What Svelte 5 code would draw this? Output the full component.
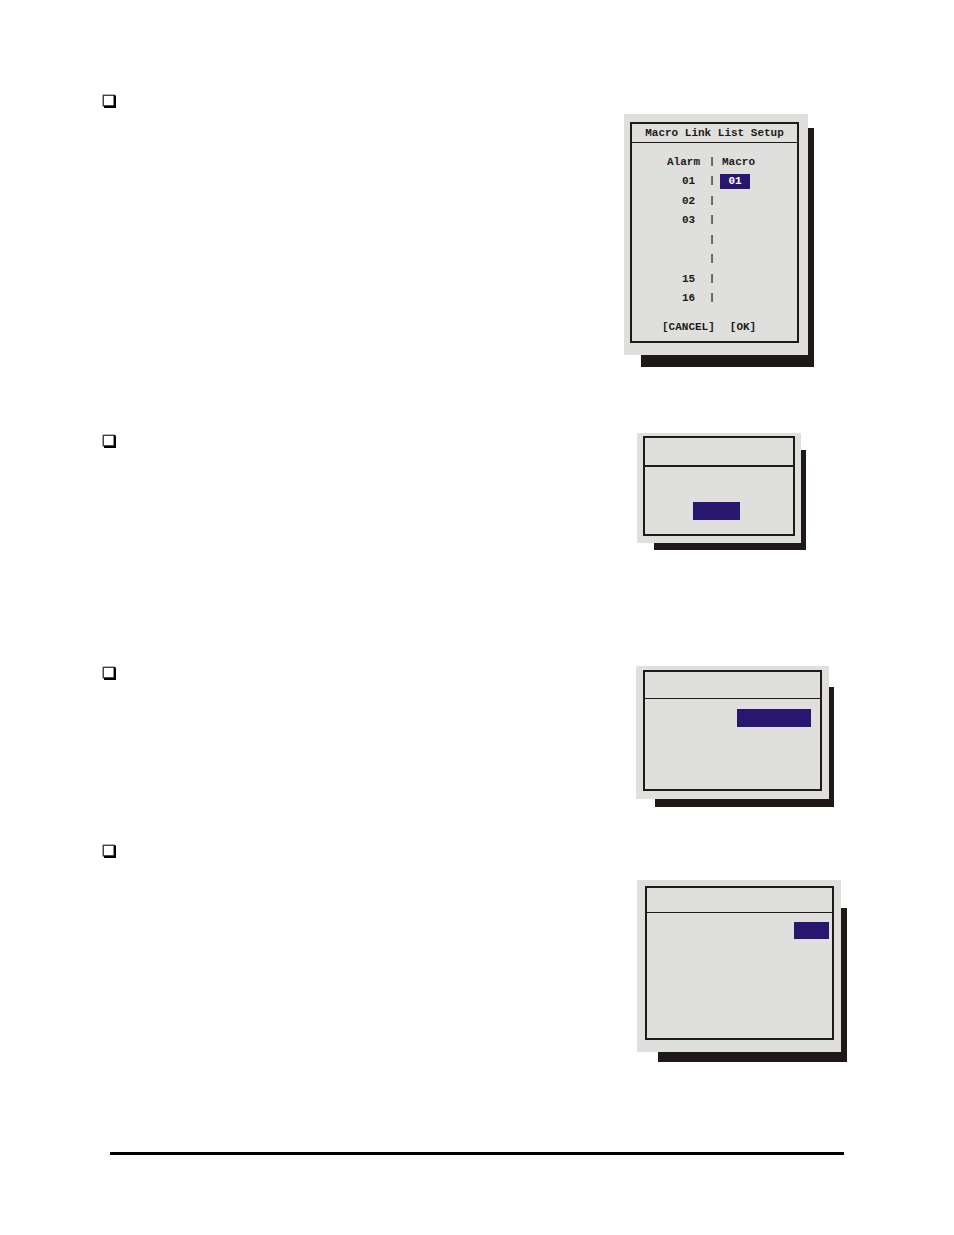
<script lang="ts">
  const rows = ['01', '02', '03', '', '', '15', '16']

  let linkedMacro = $state('01')

  const cancel = () => {
    linkedMacro = ''
  }

  const confirm = () => {
    linkedMacro = linkedMacro.trim().padStart(2, '0')
  }
</script>

{#snippet checkbox()}
  <svg class="bullet" viewBox="0 0 15 15" width="15" height="15" aria-hidden="true">
    <path d="M2 2.5H12L14 1.5V14H2Z" fill="#000" />
    <path d="M0.5 0.6H13V12.5H0.5Z" fill="#444" />
    <path d="M11.5 1.5H14V14H2V11.5H11.5Z" fill="#000" />
    <path d="M2 2H11.5V11.2H2Z" fill="#fff" />
  </svg>
{/snippet}

<main class="page">
  <ul class="steps">
    <li class="step step--macro">
      {@render checkbox()}
      <section class="panel">
        <div class="panel__frame">
          <h2 class="panel__header">Macro Link List Setup</h2>
          <table class="links">
            <thead>
              <tr>
                <th class="links__alarm">Alarm</th>
                <td class="links__bar">|</td>
                <th class="links__macro">Macro</th>
              </tr>
            </thead>
            <tbody>
              {#each rows as alarm, i}
                <tr>
                  <td class="links__number">{alarm}</td>
                  <td class="links__bar">|</td>
                  <td class="links__macro">
                    {#if i === 0}
                      <input class="links__input" type="text" aria-label="Macro" bind:value={linkedMacro} />
                    {/if}
                  </td>
                </tr>
              {/each}
            </tbody>
          </table>
          <div class="panel__actions">
            <button type="button" onclick={cancel}>[CANCEL]</button>
            <button type="button" onclick={confirm}>[OK]</button>
          </div>
        </div>
      </section>
    </li>

    {#each ['second', 'third', 'fourth'] as name}
      <li class="step step--{name}">
        {@render checkbox()}
        <section class="panel">
          <div class="panel__frame">
            <div class="panel__header"></div>
            <div class="panel__field"></div>
          </div>
        </section>
      </li>
    {/each}
  </ul>
  <hr class="rule" />
</main>

<style>
  :global(body) {
    background: #fff;
  }

  .page {
    padding: 93px 110px 80px 102px;
    font-family: 'Liberation Mono', 'Courier New', monospace;
    font-size: 11px;
    font-weight: 700;
    color: #1f1a17;
  }

  .steps {
    margin: 0;
    padding: 0;
    list-style: none;
  }

  .step {
    display: grid;
    grid-template-columns: 1fr 220px;
    align-items: start;
  }

  .bullet {
    display: block;
    margin-top: 1px;
  }

  .panel {
    position: relative;
    z-index: 0;
    box-sizing: border-box;
    background: #dfdfdd;
  }

  /* hard drop shadow, starts further in than the panel's own corner */
  .panel::before,
  .panel::after {
    content: '';
    position: absolute;
    z-index: -1;
    background: #1f1a17;
  }

  .panel::before {
    top: var(--shadow-top);
    bottom: var(--shadow-bottom);
    left: 100%;
    right: var(--shadow-right);
  }

  .panel::after {
    top: 100%;
    bottom: var(--shadow-bottom);
    left: var(--shadow-left);
    right: var(--shadow-right);
  }

  .panel__frame {
    box-sizing: border-box;
    height: 100%;
    border: 2px solid #1f1a17;
  }

  .panel__header {
    box-sizing: border-box;
    margin: 0;
    border-bottom: 1px solid #1f1a17;
    font-size: 11px;
    text-align: center;
  }

  .panel__field {
    background: #29166f;
  }

  .step--macro {
    padding: 21px 0 78px;
  }

  .step--macro .bullet {
    margin-top: -20px;
  }

  .step--macro .panel {
    --shadow-top: 14px;
    --shadow-right: -6px;
    --shadow-bottom: -12px;
    --shadow-left: 17px;
    width: 184px;
    padding: 8px 9px 12px 6px;
  }

  .step--macro .panel__header {
    height: 19px;
    line-height: 19px;
  }

  .links {
    width: 126px;
    margin: 9px 0 0 35px;
    border-collapse: collapse;
    table-layout: fixed;
  }

  .links tr {
    height: 19px;
  }

  .links thead tr,
  .links tr:nth-child(even) {
    height: 20px;
  }

  .links th,
  .links td {
    padding: 0;
    line-height: 15px;
    font-weight: 700;
    text-align: left;
    vertical-align: middle;
  }

  .links .links__alarm {
    width: 39px;
  }

  .links .links__number {
    padding-left: 15px;
  }

  .links .links__bar {
    width: 12px;
    font-size: 9px;
    text-align: center;
  }

  .links .links__macro {
    padding-left: 4px;
  }

  .links__input {
    display: block;
    box-sizing: border-box;
    width: 30px;
    height: 15px;
    margin-left: -2px;
    padding: 0;
    border: 0;
    border-radius: 0;
    background: #29166f;
    color: #fff;
    font: inherit;
    text-align: center;
  }

  .panel__actions {
    display: flex;
    gap: 15px;
    padding: 11px 0 6px 30px;
  }

  .panel__actions button {
    padding: 0;
    border: 0;
    background: none;
    color: inherit;
    font: inherit;
    line-height: 16px;
    cursor: pointer;
  }

  .step--second {
    padding-bottom: 122px;
  }

  .step--second .panel {
    --shadow-top: 17px;
    --shadow-right: -5px;
    --shadow-bottom: -7px;
    --shadow-left: 17px;
    width: 164px;
    height: 110px;
    margin-left: 13px;
    padding: 3px 6px 7px;
  }

  .step--second .panel__header {
    height: 29px;
    border-bottom-width: 2px;
  }

  .step--second .panel__field {
    width: 47px;
    height: 18px;
    margin: 35px 0 0 48px;
  }

  .step--third {
    padding-bottom: 44px;
  }

  .step--third .panel {
    --shadow-top: 21px;
    --shadow-right: -5px;
    --shadow-bottom: -8px;
    --shadow-left: 19px;
    width: 193px;
    height: 133px;
    margin: 1px 0 0 12px;
    padding: 4px 7px 8px;
  }

  .step--third .panel__header {
    height: 27px;
  }

  .step--third .panel__field {
    width: 74px;
    height: 18px;
    margin: 10px 9px 0 auto;
  }

  .step--fourth {
    padding-bottom: 100px;
  }

  .step--fourth .panel {
    --shadow-top: 28px;
    --shadow-right: -6px;
    --shadow-bottom: -10px;
    --shadow-left: 21px;
    width: 204px;
    height: 172px;
    margin: 37px 0 0 13px;
    padding: 6px 7px 12px 8px;
  }

  .step--fourth .panel__header {
    height: 25px;
  }

  .step--fourth .panel__field {
    width: 35px;
    height: 17px;
    margin: 9px 3px 0 auto;
  }

  .rule {
    height: 3px;
    margin: 0 0 0 8px;
    border: 0;
    background: #000;
  }
</style>
